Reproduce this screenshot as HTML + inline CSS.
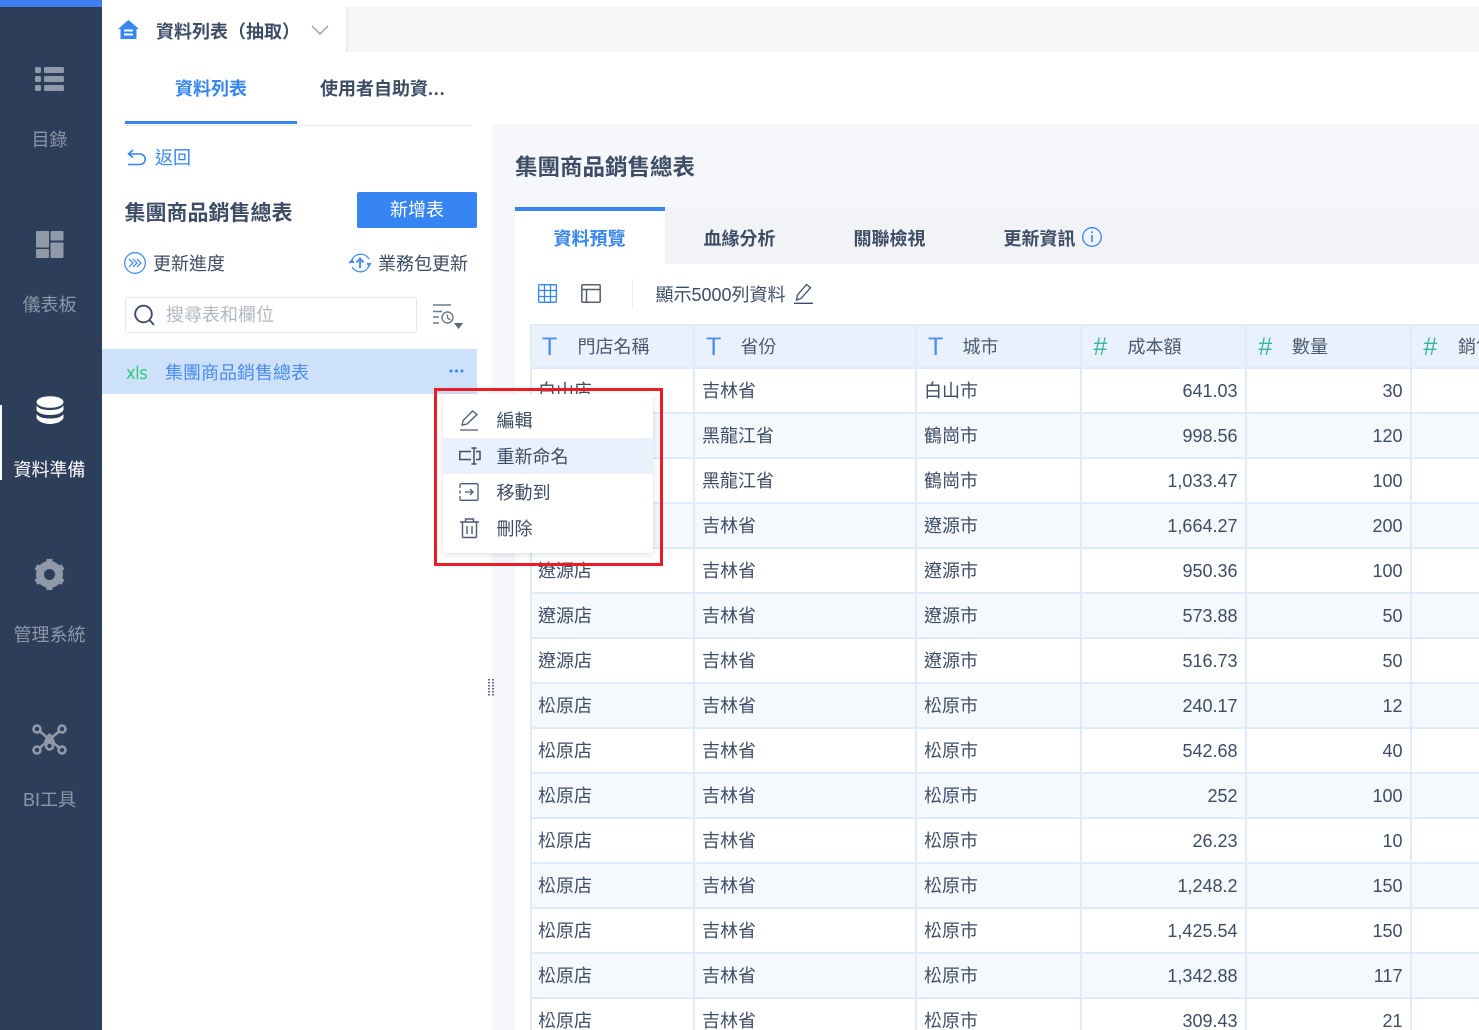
<!DOCTYPE html>
<html><head><meta charset="utf-8">
<style>
*{box-sizing:border-box}
html,body{margin:0;padding:0;width:1479px;height:1030px;overflow:hidden;background:#fff}
body{position:relative;font-family:"Liberation Sans","Noto Sans CJK TC",sans-serif;font-size:18px;color:#3d4d66}
.a{position:absolute;white-space:nowrap;line-height:28px}
.b{font-weight:bold}
.blue{color:#3685f2}
.side{left:0;top:0;width:102px;height:1030px;background:#2c3e5a}
.nav{left:0;width:99px;text-align:center;color:#8d97a7}
svg{position:absolute;overflow:visible}
.cell{position:absolute;height:44px;line-height:44px;white-space:nowrap;padding:0 8px}
.r{text-align:right}
.row{position:absolute;left:530px;width:949px;height:45px;border-bottom:2px solid #deebfb}
.row.t{background:#f5f8fd}
.vl{position:absolute;top:324px;width:2px;height:706px;background:#deebfb}
.th{position:absolute;top:326px;height:41px;background:#e9f1fd}
.hl{color:#4a5a73}
.ty{position:absolute;top:334px;font-size:25px;line-height:26px;color:#4b8ff0}
.hs{color:#35b5a4;font-size:25px}
#cells{position:absolute;left:0;top:.5px;width:1479px}
</style></head><body>
<div class="a side"></div>
<div class="a" style="left:0;top:0;width:102px;height:7px;background:#3f7df2"></div>
<div class="a" style="left:102px;top:0;width:1377px;height:7px;background:#fff"></div>
<div class="a" style="left:346px;top:7px;width:1133px;height:45px;background:#f5f6f8;border-left:2px solid #ebedf0"></div>

<svg style="left:35px;top:67px" width="30" height="25" viewBox="0 0 30 25" fill="#8f99a8"><rect width="6" height="6" rx="1.5"/><rect y="9" width="6" height="6" rx="1.5"/><rect y="18" width="6" height="6" rx="1.5"/><rect x="9" width="20" height="6" rx="1.5"/><rect x="9" y="9" width="20" height="6" rx="1.5"/><rect x="9" y="18" width="20" height="6" rx="1.5"/></svg>
<div class="a nav" style="top:126px">目錄</div>
<svg style="left:36px;top:231px" width="28" height="27" viewBox="0 0 28 27" fill="#8f99a8"><rect width="13" height="16.500" rx="1"/><rect x="14.500" width="13" height="9.500" rx="1"/><rect y="18" width="13" height="9" rx="1"/><rect x="14.500" y="11.500" width="13" height="15.500" rx="1"/></svg>
<div class="a nav" style="top:291px">儀表板</div>
<div class="a" style="left:0;top:405px;width:2px;height:75px;background:#fff"></div>
<svg style="left:36px;top:396px" width="28" height="28" viewBox="0 0 28 28" fill="#fff"><ellipse cx="14" cy="6" rx="13.5" ry="5.8"/><path d="M.5 9.5C3 13 8 14 14 14s11-1 13.500-4.500V14C26 17.500 20 19 14 19S2 17.500.5 14z"/><path d="M.5 18C3 21.500 8 22.500 14 22.500S25 21.500 27.500 18v4C26 25.500 20 28 14 28S2 25.500.5 22z"/></svg>
<div class="a nav" style="top:456px;color:#fff">資料準備</div>
<svg style="left:34px;top:559px" width="31" height="31" viewBox="0 0 31 31"><circle cx="15.500" cy="15.500" r="9.500" fill="none" stroke="#8f99a8" stroke-width="8"/><g stroke="#8f99a8" stroke-width="6"><path d="M15.500 0v5M15.500 26v5M2 7.700l4.300 2.500M24.700 20.800L29 23.300M2 23.300l4.300-2.500M24.700 10.200L29 7.700"/></g></svg>
<div class="a nav" style="top:621px">管理系統</div>
<svg style="left:32px;top:724px" width="35" height="32" viewBox="0 0 35 32" fill="none" stroke="#8f99a8" stroke-width="2.600"><circle cx="5" cy="5" r="3.500"/><circle cx="30" cy="5" r="3.500"/><circle cx="5" cy="26" r="3.500"/><circle cx="30" cy="26" r="3.500"/><circle cx="17.500" cy="22" r="3.500"/><path d="M8 7.500L27 23.500M27 7.500L8 23.500M17.500 10L13 18M17.500 10L22 18"/></svg>
<div class="a nav" style="top:786px">BI工具</div>

<!-- top tab -->
<svg style="left:118px;top:20px" width="22" height="20" viewBox="0 0 22 20"><path d="M10.500 0L21 9h-2.500v10h-16V9H0z" fill="#3685f2"/><path d="M6 10.500h9M6 14.500h9" stroke="#fff" stroke-width="2"/></svg>
<div class="a b" style="left:156px;top:18px;color:#3d4d66">資料列表（抽取）</div>
<svg style="left:311px;top:25px" width="18" height="11" viewBox="0 0 18 11" fill="none" stroke="#9aa3b1" stroke-width="1.500"><path d="M1 1l8 8 8-8"/></svg>

<div class="a b blue" style="left:175px;top:75px">資料列表</div>
<div class="a b" style="left:320px;top:75px">使用者自助資<span style="letter-spacing:.8px">...</span></div>
<div class="a" style="left:125px;top:125px;width:346px;height:1px;background:#e6e8eb"></div>
<div class="a" style="left:125px;top:121px;width:172px;height:3px;background:#3685f2"></div>

<svg style="left:127px;top:149px" width="19" height="17" viewBox="0 0 19 17" fill="none" stroke="#3685f2" stroke-width="1.600"><path d="M6 1L1.500 5 6 8.500M2 5h11a4.500 4.500 0 0 1 0 10.500H1"/></svg>
<div class="a blue" style="left:155px;top:144px">返回</div>

<div class="a b" style="left:124.500px;top:200px;font-size:21px">集團商品銷售總表</div>
<div class="a" style="left:357px;top:192px;width:120px;height:36px;line-height:36px;background:#3685f2;color:#fff;text-align:center;border-radius:2px">新增表</div>

<svg style="left:124px;top:252px" width="22" height="22" viewBox="0 0 22 22" fill="none" stroke="#4b8ff0" stroke-width="1.300"><circle cx="11" cy="11" r="10.300"/><path d="M5 7l4 4-4 4M9 7l4 4-4 4M13 7l4 4-4 4"/></svg>
<div class="a" style="left:153px;top:250px">更新進度</div>
<svg style="left:348px;top:252px" width="24" height="22" viewBox="0 0 24 22" fill="none" stroke="#4b8ff0" stroke-width="1.400"><path d="M4 8A9.500 9.500 0 0 1 21 7M21 14A9.500 9.500 0 0 1 4 15"/><path d="M1 11l3-3 2 3M23 11l-2 3-2-3" fill="#4b8ff0"/><path d="M12 16V7M8.500 10.500L12 6.500l3.500 4" stroke-width="2"/></svg>
<div class="a" style="left:378px;top:250px">業務包更新</div>

<div class="a" style="left:125px;top:297px;width:292px;height:36px;border:1px solid #e5e7ea;border-radius:3px"></div>
<svg style="left:134px;top:304px" width="22" height="22" viewBox="0 0 22 22" fill="none" stroke="#3d4d66" stroke-width="1.900"><circle cx="9.500" cy="10" r="8.300"/><path d="M15.500 16l4.500 5"/></svg>
<div class="a" style="left:166px;top:301px;color:#b3b8c1">搜尋表和欄位</div>
<svg style="left:433px;top:304px" width="30" height="27" viewBox="0 0 30 27" fill="none" stroke="#6f7a8a" stroke-width="1.400"><path d="M0 1h18M0 7.500h9M0 13h6M0 19h6"/><circle cx="14.500" cy="13.500" r="5.500"/><path d="M14.500 10.500v3.500l3 2"/><path d="M21 19h9l-4.500 6z" fill="#5c6778" stroke="none"/></svg>

<div class="a" style="left:102px;top:349px;width:375px;height:45px;background:#cde1fb"></div>
<div class="a" style="left:126px;top:360px;font-size:18px;color:#2ecb7a;letter-spacing:-.5px;font-family:'DejaVu Sans',sans-serif;transform:scaleX(.9);transform-origin:left">xls</div>
<div class="a blue" style="left:165px;top:359px;color:#4a8cef">集團商品銷售總表</div>
<svg style="left:449px;top:369px" width="15" height="4" viewBox="0 0 15 4" fill="#3685f2"><circle cx="2" cy="2" r="1.500"/><circle cx="7.500" cy="2" r="1.500"/><circle cx="13" cy="2" r="1.500"/></svg>

<!-- right panel -->
<div class="a" style="left:492px;top:124px;width:987px;height:906px;background:#f6f7fa"></div>
<div class="a b" style="left:515px;top:154px;font-size:22.500px;color:#3d4d66">集團商品銷售總表</div>
<div class="a" style="left:515px;top:207px;width:964px;height:823px;background:#fff"></div>
<div class="a" style="left:665px;top:207px;width:814px;height:57px;background:#f2f3f6"></div>
<div class="a" style="left:515px;top:207px;width:150px;height:4px;background:#3685f2"></div>
<div class="a b blue" style="left:553.500px;top:225px">資料預覽</div>
<div class="a b" style="left:703.500px;top:225px">血緣分析</div>
<div class="a b" style="left:853.500px;top:225px">關聯檢視</div>
<div class="a b" style="left:1003.500px;top:225px">更新資訊</div>
<svg style="left:1082px;top:227px" width="20" height="20" viewBox="0 0 20 20" fill="none" stroke="#3685f2" stroke-width="1.300"><circle cx="10" cy="10" r="9.300"/><path d="M10 8v7" stroke-width="1.600"/><circle cx="10" cy="5.200" r="1" fill="#3685f2" stroke="none"/></svg>

<svg style="left:538px;top:284px" width="19" height="19" viewBox="0 0 19 19" fill="none" stroke="#3685f2" stroke-width="1.300"><rect x=".7" y=".7" width="17.600" height="17.600" rx="1"/><path d="M.7 6.500h17.600M.7 12.500h17.600M6.500.7v17.600M12.500.7v17.600"/></svg>
<svg style="left:581px;top:284px" width="20" height="19" viewBox="0 0 20 19" fill="none" stroke="#545f70" stroke-width="1.500"><rect x=".8" y=".8" width="18.400" height="17.400" rx="1"/><path d="M.8 5.500h18.400M5.500 5.500v12.700"/></svg>
<div class="a" style="left:632px;top:279px;width:1px;height:30px;background:#eceef1"></div>
<div class="a" style="left:655.500px;top:281px">顯示5000列資料</div>
<svg style="left:794px;top:283px" width="20" height="21" viewBox="0 0 20 21" fill="none" stroke="#3d4d66" stroke-width="1.300"><path d="M2.500 17l1-5L12.500 1.500l4 3.200L7 15.500zM0 20.300h19"/></svg>

<!-- table -->
<div class="a" style="left:530px;top:324px;width:949px;height:2px;background:#e2ebf7"></div>
<div class="th" style="left:532px;width:161px"></div>
<div class="th" style="left:695px;width:220px"></div>
<div class="th" style="left:917px;width:163px"></div>
<div class="th" style="left:1082px;width:163px"></div>
<div class="th" style="left:1247px;width:163px"></div>
<div class="th" style="left:1412px;width:67px"></div>
<div class="a" style="left:530px;top:367px;width:949px;height:2px;background:#deebfb"></div>

<div class="row" style="top:369px"></div>
<div class="row t" style="top:414px"></div>
<div class="row" style="top:459px"></div>
<div class="row t" style="top:504px"></div>
<div class="row" style="top:549px"></div>
<div class="row t" style="top:594px"></div>
<div class="row" style="top:639px"></div>
<div class="row t" style="top:684px"></div>
<div class="row" style="top:729px"></div>
<div class="row t" style="top:774px"></div>
<div class="row" style="top:819px"></div>
<div class="row t" style="top:864px"></div>
<div class="row" style="top:909px"></div>
<div class="row t" style="top:954px"></div>
<div class="row" style="top:999px"></div>

<div class="vl" style="left:530px;background:#e4e9f2"></div>
<div class="vl" style="left:693px"></div>
<div class="vl" style="left:915px"></div>
<div class="vl" style="left:1080px"></div>
<div class="vl" style="left:1245px"></div>
<div class="vl" style="left:1410px"></div>

<div class="ty" style="left:542px;font-family:'Liberation Sans',sans-serif">T</div>
<div class="a hl" style="left:577.500px;top:333px">門店名稱</div>
<div class="ty" style="left:706px">T</div>
<div class="a hl" style="left:740.500px;top:333px">省份</div>
<div class="ty" style="left:928px">T</div>
<div class="a hl" style="left:962.500px;top:333px">城市</div>
<div class="ty hs" style="left:1093px;font-style:italic">#</div>
<div class="a hl" style="left:1127.500px;top:333px">成本額</div>
<div class="ty hs" style="left:1258px;font-style:italic">#</div>
<div class="a hl" style="left:1292px;top:333px">數量</div>
<div class="ty hs" style="left:1423px;font-style:italic">#</div>
<div class="a hl" style="left:1458px;top:333px;width:21px;overflow:hidden">銷售</div>

<div id="cells">
<div class="cell" style="left:530px;top:368px">白山店</div><div class="cell" style="left:694px;top:368px">吉林省</div><div class="cell" style="left:916px;top:368px">白山市</div><div class="cell r" style="left:1081px;width:164.500px;top:368px">641.03</div><div class="cell r" style="left:1246px;width:164.500px;top:368px">30</div>
<div class="cell" style="left:694px;top:413px">黑龍江省</div><div class="cell" style="left:916px;top:413px">鶴崗市</div><div class="cell r" style="left:1081px;width:164.500px;top:413px">998.56</div><div class="cell r" style="left:1246px;width:164.500px;top:413px">120</div>
<div class="cell" style="left:694px;top:458px">黑龍江省</div><div class="cell" style="left:916px;top:458px">鶴崗市</div><div class="cell r" style="left:1081px;width:164.500px;top:458px">1,033.47</div><div class="cell r" style="left:1246px;width:164.500px;top:458px">100</div>
<div class="cell" style="left:694px;top:503px">吉林省</div><div class="cell" style="left:916px;top:503px">遼源市</div><div class="cell r" style="left:1081px;width:164.500px;top:503px">1,664.27</div><div class="cell r" style="left:1246px;width:164.500px;top:503px">200</div>
<div class="cell" style="left:530px;top:548px">遼源店</div><div class="cell" style="left:694px;top:548px">吉林省</div><div class="cell" style="left:916px;top:548px">遼源市</div><div class="cell r" style="left:1081px;width:164.500px;top:548px">950.36</div><div class="cell r" style="left:1246px;width:164.500px;top:548px">100</div>
<div class="cell" style="left:530px;top:593px">遼源店</div><div class="cell" style="left:694px;top:593px">吉林省</div><div class="cell" style="left:916px;top:593px">遼源市</div><div class="cell r" style="left:1081px;width:164.500px;top:593px">573.88</div><div class="cell r" style="left:1246px;width:164.500px;top:593px">50</div>
<div class="cell" style="left:530px;top:638px">遼源店</div><div class="cell" style="left:694px;top:638px">吉林省</div><div class="cell" style="left:916px;top:638px">遼源市</div><div class="cell r" style="left:1081px;width:164.500px;top:638px">516.73</div><div class="cell r" style="left:1246px;width:164.500px;top:638px">50</div>
<div class="cell" style="left:530px;top:683px">松原店</div><div class="cell" style="left:694px;top:683px">吉林省</div><div class="cell" style="left:916px;top:683px">松原市</div><div class="cell r" style="left:1081px;width:164.500px;top:683px">240.17</div><div class="cell r" style="left:1246px;width:164.500px;top:683px">12</div>
<div class="cell" style="left:530px;top:728px">松原店</div><div class="cell" style="left:694px;top:728px">吉林省</div><div class="cell" style="left:916px;top:728px">松原市</div><div class="cell r" style="left:1081px;width:164.500px;top:728px">542.68</div><div class="cell r" style="left:1246px;width:164.500px;top:728px">40</div>
<div class="cell" style="left:530px;top:773px">松原店</div><div class="cell" style="left:694px;top:773px">吉林省</div><div class="cell" style="left:916px;top:773px">松原市</div><div class="cell r" style="left:1081px;width:164.500px;top:773px">252</div><div class="cell r" style="left:1246px;width:164.500px;top:773px">100</div>
<div class="cell" style="left:530px;top:818px">松原店</div><div class="cell" style="left:694px;top:818px">吉林省</div><div class="cell" style="left:916px;top:818px">松原市</div><div class="cell r" style="left:1081px;width:164.500px;top:818px">26.23</div><div class="cell r" style="left:1246px;width:164.500px;top:818px">10</div>
<div class="cell" style="left:530px;top:863px">松原店</div><div class="cell" style="left:694px;top:863px">吉林省</div><div class="cell" style="left:916px;top:863px">松原市</div><div class="cell r" style="left:1081px;width:164.500px;top:863px">1,248.2</div><div class="cell r" style="left:1246px;width:164.500px;top:863px">150</div>
<div class="cell" style="left:530px;top:908px">松原店</div><div class="cell" style="left:694px;top:908px">吉林省</div><div class="cell" style="left:916px;top:908px">松原市</div><div class="cell r" style="left:1081px;width:164.500px;top:908px">1,425.54</div><div class="cell r" style="left:1246px;width:164.500px;top:908px">150</div>
<div class="cell" style="left:530px;top:953px">松原店</div><div class="cell" style="left:694px;top:953px">吉林省</div><div class="cell" style="left:916px;top:953px">松原市</div><div class="cell r" style="left:1081px;width:164.500px;top:953px">1,342.88</div><div class="cell r" style="left:1246px;width:164.500px;top:953px">117</div>
<div class="cell" style="left:530px;top:998px">松原店</div><div class="cell" style="left:694px;top:998px">吉林省</div><div class="cell" style="left:916px;top:998px">松原市</div><div class="cell r" style="left:1081px;width:164.500px;top:998px">309.43</div><div class="cell r" style="left:1246px;width:164.500px;top:998px">21</div>
</div>

<!-- resize handle -->
<svg style="left:488px;top:679px" width="7" height="18" viewBox="0 0 7 18" fill="#5d6a80"><g id="h"><rect x="0" y="0" width="2" height="1.500"/><rect x="4" y="0" width="2" height="1.500"/><rect x="0" y="3" width="2" height="1.500"/><rect x="4" y="3" width="2" height="1.500"/><rect x="0" y="6" width="2" height="1.500"/><rect x="4" y="6" width="2" height="1.500"/><rect x="0" y="9" width="2" height="1.500"/><rect x="4" y="9" width="2" height="1.500"/><rect x="0" y="12" width="2" height="1.500"/><rect x="4" y="12" width="2" height="1.500"/><rect x="0" y="15" width="2" height="1.500"/><rect x="4" y="15" width="2" height="1.500"/></g></svg>

<!-- popup -->
<div class="a" style="left:434px;top:388px;width:229px;height:178px;border:3px solid #ec1c24"></div>
<div class="a" style="left:443px;top:394px;width:210px;height:159px;background:#fff;border-radius:3px;box-shadow:0 2px 8px rgba(40,60,90,.16)"></div>
<div class="a" style="left:443px;top:438px;width:210px;height:36px;background:#e9f1fd"></div>
<svg style="left:460px;top:410px" width="20" height="21" viewBox="0 0 20 21" fill="none" stroke="#4a5a73" stroke-width="1.300"><path d="M2 15l1.300-4.700L12.500 1l4.500 3.500L7 14zM0 20h18"/></svg>
<div class="a" style="left:496.500px;top:407px">編輯</div>
<svg style="left:459px;top:447px" width="22" height="18" viewBox="0 0 22 18" fill="none" stroke="#3d4d66" stroke-width="1.500"><path d="M12 4.500H.8v8H12M17 4.500h4v8h-4M15 1v16M12.500 1h5M12.500 17h5"/></svg>
<div class="a" style="left:496.500px;top:443px">重新命名</div>
<svg style="left:459px;top:483px" width="20" height="18" viewBox="0 0 20 18" fill="none" stroke="#4a5a73" stroke-width="1.300"><path d="M1 5V2a1.300 1.300 0 0 1 1.300-1.300h15.700A1.300 1.300 0 0 1 19 2v14a1.300 1.300 0 0 1-1.300 1.300H2.300A1.300 1.300 0 0 1 1 16v-3M1 7.500v3"/><path d="M6 9h8M11 6l3 3-3 3"/></svg>
<div class="a" style="left:496.500px;top:479px">移動到</div>
<svg style="left:460px;top:518px" width="19" height="20" viewBox="0 0 19 20" fill="none" stroke="#4a5a73" stroke-width="1.400"><path d="M0 4h19M5.500 4V1h8v3M2.500 4v14.500a1 1 0 0 0 1 1h12a1 1 0 0 0 1-1V4M7 8v8M12 8v8"/></svg>
<div class="a" style="left:496.500px;top:515px">刪除</div>
</body></html>
